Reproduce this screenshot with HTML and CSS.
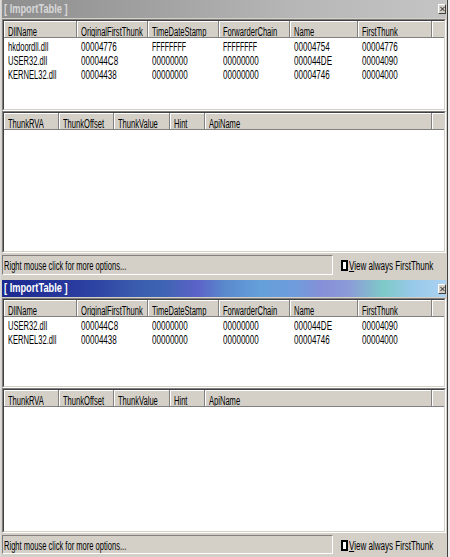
FILE: index.html
```html
<!DOCTYPE html>
<html>
<head>
<meta charset="utf-8">
<link rel="stylesheet" href="styles.css">
</head>
<body>
<div class="win w1">
  <div class="title inactive">
    <span class="tt">[ ImportTable ]</span>
    <span class="close"><svg width="6" height="6" viewBox="0 0 6 6"><path d="M0.5 0.5L5.5 5.5M5.5 0.5L0.5 5.5" stroke="#202020" stroke-width="1.2"/></svg></span>
  </div>
  <div class="list l1">
    <div class="inner">
      <div class="hdr ga">
        <div class="hc"><span class="t">DllName</span></div>
        <div class="hc"><span class="t">OriginalFirstThunk</span></div>
        <div class="hc"><span class="t">TimeDateStamp</span></div>
        <div class="hc"><span class="t">ForwarderChain</span></div>
        <div class="hc"><span class="t">Name</span></div>
        <div class="hc"><span class="t">FirstThunk</span></div>
        <div class="hc"></div>
      </div>
      <div class="rows">
        <div class="row ga">
          <div class="c"><span class="t">hkdoordll.dll</span></div>
          <div class="c"><span class="t n">00004776</span></div>
          <div class="c"><span class="t f">FFFFFFFF</span></div>
          <div class="c"><span class="t f">FFFFFFFF</span></div>
          <div class="c"><span class="t n">00004754</span></div>
          <div class="c"><span class="t n">00004776</span></div>
        </div>
        <div class="row ga">
          <div class="c"><span class="t">USER32.dll</span></div>
          <div class="c"><span class="t n">000044C8</span></div>
          <div class="c"><span class="t n">00000000</span></div>
          <div class="c"><span class="t n">00000000</span></div>
          <div class="c"><span class="t n">000044DE</span></div>
          <div class="c"><span class="t n">00004090</span></div>
        </div>
        <div class="row ga">
          <div class="c"><span class="t">KERNEL32.dll</span></div>
          <div class="c"><span class="t n">00004438</span></div>
          <div class="c"><span class="t n">00000000</span></div>
          <div class="c"><span class="t n">00000000</span></div>
          <div class="c"><span class="t n">00004746</span></div>
          <div class="c"><span class="t n">00004000</span></div>
        </div>
      </div>
    </div>
  </div>
  <div class="list l2">
    <div class="inner">
      <div class="hdr gb">
        <div class="hc"><span class="t">ThunkRVA</span></div>
        <div class="hc"><span class="t">ThunkOffset</span></div>
        <div class="hc"><span class="t">ThunkValue</span></div>
        <div class="hc"><span class="t">Hint</span></div>
        <div class="hc"><span class="t">ApiName</span></div>
        <div class="hc"></div>
      </div>
    </div>
  </div>
  <div class="status">
    <div class="msg"><span class="t">Right mouse click for more options...</span></div>
    <div class="chk"></div>
    <div class="lbl"><span class="t"><u>V</u>iew always FirstThunk</span></div>
  </div>
</div>

<div class="win w2">
  <div class="title active">
    <span class="tt">[ ImportTable ]</span>
    <span class="close"><svg width="6" height="6" viewBox="0 0 6 6"><path d="M0.5 0.5L5.5 5.5M5.5 0.5L0.5 5.5" stroke="#202020" stroke-width="1.2"/></svg></span>
  </div>
  <div class="list l1">
    <div class="inner">
      <div class="hdr ga">
        <div class="hc"><span class="t">DllName</span></div>
        <div class="hc"><span class="t">OriginalFirstThunk</span></div>
        <div class="hc"><span class="t">TimeDateStamp</span></div>
        <div class="hc"><span class="t">ForwarderChain</span></div>
        <div class="hc"><span class="t">Name</span></div>
        <div class="hc"><span class="t">FirstThunk</span></div>
        <div class="hc"></div>
      </div>
      <div class="rows">
        <div class="row ga">
          <div class="c"><span class="t">USER32.dll</span></div>
          <div class="c"><span class="t n">000044C8</span></div>
          <div class="c"><span class="t n">00000000</span></div>
          <div class="c"><span class="t n">00000000</span></div>
          <div class="c"><span class="t n">000044DE</span></div>
          <div class="c"><span class="t n">00004090</span></div>
        </div>
        <div class="row ga">
          <div class="c"><span class="t">KERNEL32.dll</span></div>
          <div class="c"><span class="t n">00004438</span></div>
          <div class="c"><span class="t n">00000000</span></div>
          <div class="c"><span class="t n">00000000</span></div>
          <div class="c"><span class="t n">00004746</span></div>
          <div class="c"><span class="t n">00004000</span></div>
        </div>
      </div>
    </div>
  </div>
  <div class="list l2">
    <div class="inner">
      <div class="hdr gb">
        <div class="hc"><span class="t">ThunkRVA</span></div>
        <div class="hc"><span class="t">ThunkOffset</span></div>
        <div class="hc"><span class="t">ThunkValue</span></div>
        <div class="hc"><span class="t">Hint</span></div>
        <div class="hc"><span class="t">ApiName</span></div>
        <div class="hc"></div>
      </div>
    </div>
  </div>
  <div class="status">
    <div class="msg"><span class="t">Right mouse click for more options...</span></div>
    <div class="chk"></div>
    <div class="lbl"><span class="t"><u>V</u>iew always FirstThunk</span></div>
  </div>
</div>
</body>
</html>
```
FILE: styles.css
```css
body {
  margin: 0;
  background: #ececec;
  font-family: "Liberation Sans", Arial, sans-serif;
  font-size: 12px;
  color: #000;
  overflow: hidden;
}

.win {
  width: 448px;
  box-sizing: border-box;
  border-left: 1px solid #dcdcdc;
  border-right: 1px solid #404040;
  padding: 0 1px 2px 1px;
  background: #d4d0c8;
  display: flex;
  flex-direction: column;
}
.w1 { height: 279px; }
.w2 { height: 278px; padding-top: 1px; }

.title {
  height: 18px;
  display: flex;
  align-items: center;
  padding-left: 2px;
  flex: none;
}
.w2 .title { height: 17px; }
.inactive {
  background: linear-gradient(90deg, #8e8e8e 0%, #a2a2a2 35%, #b6b6b6 65%, #c4c4c4 100%);
  color: #d8d8d8;
}
.active {
  background: linear-gradient(90deg, #1a2890 0%, #25349a 12%, #2f46a4 22%, #3a5cae 30%, #3d64b2 36%, #5c62c8 44%, #5a88cc 50%, #64a0da 58%, #6e9cdc 66%, #8690d8 72%, #8c9ad8 78%, #7ecac8 86%, #96c8e8 92%, #acd2f2 100%);
  color: #fff;
}
.tt {
  font-weight: bold;
  font-size: 12.5px;
  line-height: 17px;
  display: inline-block;
  white-space: nowrap;
  transform: scaleX(0.74);
  transform-origin: left center;
}
.close {
  margin-left: auto;
  width: 8px;
  height: 10px;
  box-sizing: border-box;
  background: #d4d0c8;
  border: 1px solid;
  border-color: #fff #404040 #404040 #fff;
  display: flex;
  align-items: center;
  justify-content: center;
  flex: none;
}
.close svg { display: block; width: 5px; height: 6px; }

.list {
  box-sizing: border-box;
  border: 1px solid;
  border-color: #808080 #fff #fff #808080;
  flex: none;
}
.w1 .l1 { margin-top: 1px; height: 92px; }
.w1 .l2 { height: 142px; }
.w2 .l1 { margin-top: 1px; height: 90px; }
.w2 .l2 { height: 145px; }

.inner {
  height: 100%;
  box-sizing: border-box;
  border: 1px solid;
  border-color: #404040 #d4d0c8 #d4d0c8 #404040;
  background: #fff;
  overflow: hidden;
}

.ga { display: grid; grid-template-columns: 73px 71px 71px 71px 68px 74px 1fr; }
.gb { display: grid; grid-template-columns: 55px 55px 56px 35px 227px 1fr; }

.hc {
  height: 17px;
  box-sizing: border-box;
  background: #d4d0c8;
  border-right: 1px solid #808080;
  border-bottom: 1px solid #808080;
  box-shadow: inset 1px 1px 0 #fff;
  padding: 4px 0 0 4px;
  line-height: 14px;
  overflow: hidden;
}
.hc:last-child { border-right: none; }

.rows { padding-top: 2px; }
.row { height: 14px; line-height: 14px; }
.c { padding-left: 4px; overflow: hidden; }

.t {
  display: inline-block;
  white-space: nowrap;
  transform: scaleX(0.63);
  transform-origin: left center;
}
.t.n { transform: scaleX(0.67); }
.t.f { transform: scaleX(0.58); }

.status {
  display: flex;
  align-items: flex-start;
  padding-top: 2px;
  flex: none;
  box-sizing: border-box;
}
.w1 .status { height: 24px; }
.w2 .status { height: 22px; }
.msg {
  flex: none;
  width: 331px;
  height: 20px;
  box-sizing: border-box;
  border: 1px solid;
  border-color: #808080 #fff #fff #808080;
  padding: 3px 0 0 1px;
  line-height: 15px;
  overflow: hidden;
}
.w2 .msg { height: 19px; }
.chk {
  flex: none;
  width: 7px;
  height: 11px;
  box-sizing: border-box;
  border: 2px solid #000;
  background: #fff;
  margin: 5px 0 0 8px;
}
.lbl {
  flex: none;
  width: 90px;
  margin-left: 1px;
  padding-top: 4px;
  line-height: 15px;
  white-space: nowrap;
  overflow: hidden;
}
.lbl .t { transform: scaleX(0.67); }
.lbl u { text-decoration: underline; }
```
